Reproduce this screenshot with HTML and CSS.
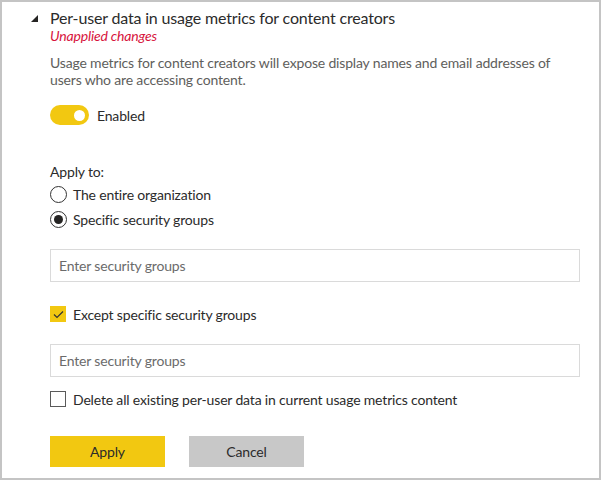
FILE: index.html
```html
<!DOCTYPE html>
<html>
<head>
<meta charset="utf-8">
<link rel="stylesheet" href="styles.css">
</head>
<body>
<div class="panel">
  <div class="header">
    <svg class="caret" width="7" height="7" viewBox="0 0 7 7"><polygon points="7,0 7,7 0,7" fill="#252423"/></svg>
    <div class="title">Per-user data in usage metrics for content creators</div>
  </div>
  <div class="body">
    <div class="unapplied">Unapplied changes</div>
    <div class="desc">Usage metrics for content creators will expose display names and email addresses of users who are accessing content.</div>
    <div class="toggle-row">
      <span class="toggle"><span class="knob"></span></span>
      <span class="label">Enabled</span>
    </div>
    <div class="apply-to">Apply to:</div>
    <div class="radio-row"><span class="radio"></span><span class="label">The entire organization</span></div>
    <div class="radio-row"><span class="radio checked"><span class="dot"></span></span><span class="label">Specific security groups</span></div>
    <div class="input input-first">Enter security groups</div>
    <div class="check-row check-except">
      <span class="checkbox checked"><svg width="11" height="9" viewBox="0 0 11 9"><polyline points="1,4.5 4,7.5 10,1.5" fill="none" stroke="#333" stroke-width="1.2"/></svg></span>
      <span class="label">Except specific security groups</span>
    </div>
    <div class="input input-second">Enter security groups</div>
    <div class="check-row check-delete">
      <span class="checkbox"></span>
      <span class="label">Delete all existing per-user data in current usage metrics content</span>
    </div>
    <div class="buttons">
      <div class="btn btn-apply">Apply</div>
      <div class="btn btn-cancel">Cancel</div>
    </div>
  </div>
</div>
</body>
</html>
```
FILE: styles.css
```css
html, body {
  margin: 0;
  padding: 0;
  background: #fff;
}
body {
  font-family: "Lato", "Open Sans", sans-serif;
  color: #2b2b2b;
  letter-spacing: -0.17px;
}
.panel {
  box-sizing: border-box;
  width: 601px;
  height: 480px;
  border: 2px solid #c4c4c4;
}
.header {
  display: flex;
  align-items: center;
  height: 20px;
  margin-top: 6px;
  padding-left: 29px;
}
.caret {
  margin-right: 12px;
  margin-top: 1px;
}
.title {
  font-size: 16px;
  line-height: 20px;
  color: #2b2b2b;
}
.body {
  padding-left: 48px;
  padding-right: 19px;
  display: flex;
  flex-direction: column;
  align-items: flex-start;
}
.unapplied {
  font-size: 14px;
  line-height: 18px;
  font-style: italic;
  color: #d7143c;
  margin-top: -1px;
}
.desc {
  margin-top: 9px;
  font-size: 14px;
  line-height: 17px;
  color: #605e5c;
}
.label {
  font-size: 14px;
  color: #2b2b2b;
}
.toggle-row {
  margin-top: 17px;
  height: 20px;
  display: flex;
  align-items: center;
}
.toggle {
  width: 39px;
  height: 20px;
  border-radius: 10px;
  background: #f2c811;
  position: relative;
  margin-right: 8px;
}
.knob {
  position: absolute;
  width: 11px;
  height: 11px;
  border-radius: 50%;
  background: #fff;
  right: 4px;
  top: 4.5px;
}
.apply-to {
  margin-top: 37px;
  font-size: 14px;
  line-height: 20px;
  color: #2b2b2b;
}
.radio-row {
  height: 25px;
  display: flex;
  align-items: center;
}
.radio {
  box-sizing: border-box;
  width: 17px;
  height: 17px;
  border: 1px solid #333;
  border-radius: 50%;
  margin-right: 6px;
  display: flex;
  align-items: center;
  justify-content: center;
}
.dot {
  width: 9px;
  height: 9px;
  border-radius: 50%;
  background: #252423;
}
.input {
  box-sizing: border-box;
  align-self: stretch;
  height: 33px;
  border: 1px solid #dadada;
  padding-left: 8px;
  display: flex;
  align-items: center;
  font-size: 14px;
  color: #6b6b6b;
}
.input-first {
  margin-top: 17px;
}
.input-second {
  margin-top: 20px;
}
.check-row {
  height: 20px;
  display: flex;
  align-items: center;
}
.check-except {
  margin-top: 22px;
}
.check-delete {
  margin-top: 12px;
}
.checkbox {
  box-sizing: border-box;
  width: 16px;
  height: 16px;
  border: 1px solid #5a5a5a;
  margin-right: 7px;
  display: flex;
  align-items: center;
  justify-content: center;
}
.checkbox.checked {
  background: #f2c811;
  border-color: #f2c811;
}
.buttons {
  margin-top: 27px;
  display: flex;
  gap: 24px;
}
.btn {
  width: 115px;
  height: 31px;
  display: flex;
  align-items: center;
  justify-content: center;
  font-size: 14px;
  color: #2b2b2b;
}
.btn-apply {
  background: #f2c811;
}
.btn-cancel {
  background: #c8c8c8;
}
```
